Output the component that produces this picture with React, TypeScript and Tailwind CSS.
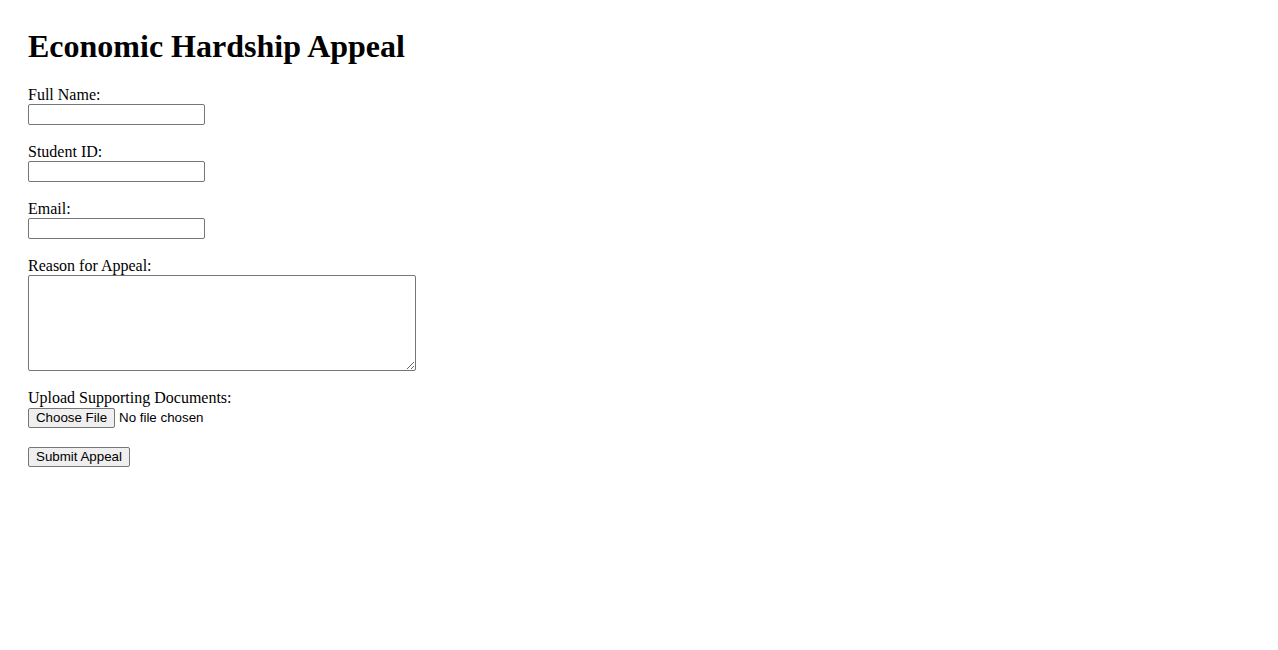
import React from "react";

const serif = { fontFamily: '"Liberation Serif", "Times New Roman", serif' };

function Field({ label, id }: { label: string; id: string }) {
  return (
    <div className="mb-[18px]">
      <label htmlFor={id} className="block text-[16px] leading-[18px] text-black">
        {label}
      </label>
      <input
        id={id}
        type="text"
        className="block w-[177px] h-[21px] border border-[#767676] rounded-[2px] bg-white px-[2px] text-[13.333px] outline-none"
        style={{ fontFamily: '"Liberation Sans", Arial, sans-serif' }}
      />
    </div>
  );
}

export default function App() {
  return (
    <div className="min-h-[650px] bg-white pt-[28px] pl-[28px] text-black" style={serif}>
      <h1 className="text-[32px] leading-[36.8px] font-bold mb-[21.2px]">Economic Hardship Appeal</h1>
      <form onSubmit={(e) => e.preventDefault()}>
        <Field label="Full Name:" id="name" />
        <Field label="Student ID:" id="sid" />
        <Field label="Email:" id="email" />
        <div className="mb-[18.5px]">
          <label htmlFor="reason" className="block text-[16px] leading-[18px]">
            Reason for Appeal:
          </label>
          <textarea
            id="reason"
            className="block w-[388px] h-[96px] border border-[#767676] rounded-[2px] bg-white p-[2px] text-[13.333px] outline-none"
            style={{ fontFamily: '"Liberation Mono", monospace' }}
          />
        </div>
        <div className="mb-[19px]">
          <label className="block text-[16px] leading-[18px] pb-[1px]">Upload Supporting Documents:</label>
          <div className="flex items-center h-[20px]" style={{ fontFamily: '"Liberation Sans", Arial, sans-serif' }}>
            <button
              type="button"
              className="w-[87px] h-[20px] border border-[#767676] rounded-[2px] bg-[#efefef] text-[13.333px] leading-[16px] text-black flex items-center justify-center"
            >
              Choose File
            </button>
            <span className="ml-[4px] text-[13.333px] leading-[16px]">No file chosen</span>
          </div>
        </div>
        <button
          type="submit"
          className="w-[102px] h-[20px] border border-[#767676] rounded-[2px] bg-[#efefef] text-[13.333px] leading-[16px] text-black flex items-center justify-center"
          style={{ fontFamily: '"Liberation Sans", Arial, sans-serif' }}
        >
          Submit Appeal
        </button>
      </form>
    </div>
  );
}
